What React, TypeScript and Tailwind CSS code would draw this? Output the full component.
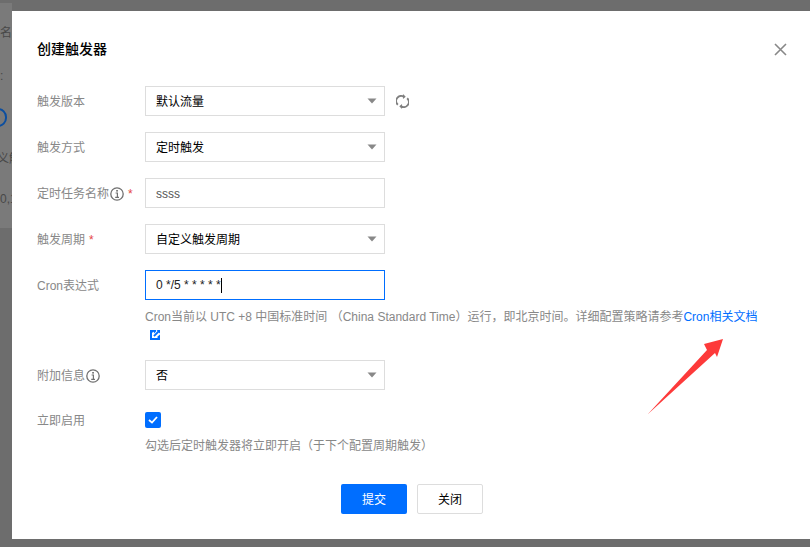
const font = "font-['Liberation_Sans','Noto_Sans_CJK_SC',sans-serif]"

function Caret() {
  return (
    <svg width="10" height="6" viewBox="0 0 10 6" className="shrink-0">
      <path d="M0.5 0.5h9L5 5.5z" fill="#888888" />
    </svg>
  )
}

function InfoIcon() {
  return (
    <svg width="14" height="14" viewBox="0 0 14 14" fill="none" className="shrink-0">
      <circle cx="7" cy="7" r="6.2" stroke="#707070" strokeWidth="1.3" />
      <rect x="6.2" y="3" width="1.7" height="1.6" fill="#707070" />
      <path d="M5.6 6h1.8v4.2M5.2 10.4h3.8" stroke="#707070" strokeWidth="1.2" />
    </svg>
  )
}

function Select({ value }: { value: string }) {
  return (
    <div className="flex h-[30px] w-[240px] items-center justify-between border border-[#dddddd] bg-white pl-[10px] pr-[7px] text-xs text-black">
      <span className="pt-[2px]">{value}</span>
      <Caret />
    </div>
  )
}

function Row({ label, children, className }: { label: React.ReactNode; children: React.ReactNode; className?: string }) {
  return (
    <div className={`flex ${className ?? ''}`}>
      <div className="flex h-[30px] w-[108px] shrink-0 items-center gap-[1px] pt-[1px] text-xs text-[#888888]">{label}</div>
      <div>{children}</div>
    </div>
  )
}

const Star = () => <span className="ml-[3px] text-xs text-[#e54545]">*</span>

export default function App() {
  return (
    <div className={`relative h-[547px] w-[810px] overflow-hidden bg-[#6d6d6d] ${font}`}>
      {/* page behind the mask */}
      <div className="absolute left-0 top-[3px] h-[225px] w-[12px] bg-[#7a7a7a] text-xs text-[#484848]">
        <div className="absolute left-0 top-[22px]">名</div>
        <div className="absolute left-0 top-[65px]">:</div>
        <div className="absolute left-[-11px] top-[105px] h-[19px] w-[18px] rounded-full border-2 border-[#0b4ea0]" />
        <div className="absolute left-[-3px] top-[148px] whitespace-nowrap">义触</div>
        <div className="absolute left-0 top-[188px] whitespace-nowrap">0,1</div>
      </div>

      <div className="absolute left-[12px] top-[11px] h-[528px] w-[798px] bg-white pl-[25px] pt-[28px]">
        <h2 className="text-sm leading-[20px] font-medium text-black">创建触发器</h2>

        <button className="absolute right-[23px] top-[32px] text-[#888888]">
          <svg width="13" height="13" viewBox="0 0 13 13" fill="none">
            <path d="M1 1l11 11M12 1L1 12" stroke="currentColor" strokeWidth="1.6" />
          </svg>
        </button>

        <div className="mt-[27px] flex flex-col">
          <Row label="触发版本">
            <div className="flex items-center">
              <Select value="默认流量" />
              <svg width="13" height="15" viewBox="0 0 14 16" fill="none" className="ml-[11px]">
                <path d="M2 11.5A5.5 5.5 0 0 1 8.5 2.7" stroke="#808080" strokeWidth="2" />
                <path d="M12 4.5A5.5 5.5 0 0 1 5.5 13.3" stroke="#808080" strokeWidth="2" />
                <path d="M7.5 0l3 2.8-3 2.4zM6.5 16l-3-2.8 3-2.4z" fill="#808080" />
              </svg>
            </div>
          </Row>
          <Row label="触发方式" className="mt-[16px]">
            <Select value="定时触发" />
          </Row>
          <Row
            label={
              <>
                定时任务名称
                <InfoIcon />
                <Star />
              </>
            }
            className="mt-[16px]"
          >
            <div className="flex h-[30px] w-[240px] items-center border border-[#dddddd] pl-[10px] pt-[1px] text-xs text-[#555555]">ssss</div>
          </Row>
          <Row
            label={
              <>
                触发周期
                <Star />
              </>
            }
            className="mt-[16px]"
          >
            <Select value="自定义触发周期" />
          </Row>
          <Row label="Cron表达式" className="mt-[16px]">
            <div className="flex h-[30px] w-[240px] items-center border border-[#006eff] pl-[10px] text-xs text-[#222222]">
              0 */5 * * * * *<span className="h-[15px] w-[1px] bg-black" />
            </div>
            <p className="mt-[8px] w-[620px] text-xs leading-[18px] text-[#888888]">
              Cron当前以 UTC +8 中国标准时间 （China Standard Time）运行，即北京时间。详细配置策略请参考
              <span className="text-[#006eff]">Cron相关文档</span>
              <svg width="10" height="10" viewBox="0 0 10 10" className="ml-[5px] inline-block align-[-1px]">
                <path d="M0 0h6v1.5L4 3.5V0zM0 0h5.5L3 2.5H2v5.5h5.5V6.5L10 4.5V10H0z" fill="#006eff" />
                <path d="M6.5 0H10v3.5L8.9 2.4 4.6 6.7 3.3 5.4 7.6 1.1z" fill="#006eff" />
              </svg>
            </p>
          </Row>
          <Row
            label={
              <>
                附加信息
                <InfoIcon />
              </>
            }
            className="mt-[16px]"
          >
            <Select value="否" />
          </Row>
          <Row label="立即启用" className="mt-[15px]">
            <div className="flex h-[30px] items-center">
              <span className="flex h-4 w-4 items-center justify-center rounded-[2px] bg-[#006eff]">
                <svg width="10" height="8" viewBox="0 0 10 8" fill="none">
                  <path d="M1 4l3 2.6L9 1" stroke="white" strokeWidth="1.8" />
                </svg>
              </span>
            </div>
            <p className="mt-[2px] text-xs leading-[18px] text-[#888888]">勾选后定时触发器将立即开启（于下个配置周期触发）</p>
          </Row>
        </div>

        <div className="mt-[29px] flex gap-[10px] pl-[304px]">
          <button className="h-[30px] w-[66px] rounded-[2px] bg-[#006eff] pt-[1px] text-xs text-white">提交</button>
          <button className="h-[30px] w-[66px] rounded-[2px] border border-[#dddddd] bg-white pt-[1px] text-xs text-black">关闭</button>
        </div>

        {/* annotation arrow; box sits at page (642,335) */}
        <svg width="85" height="85" viewBox="0 0 85 85" className="absolute left-[630px] top-[324px]">
          <path d="M5.5 79.5L65 15L62 9L81 4L75 22L73 18Z" fill="#fd3a3a" />
        </svg>
      </div>
    </div>
  )
}
